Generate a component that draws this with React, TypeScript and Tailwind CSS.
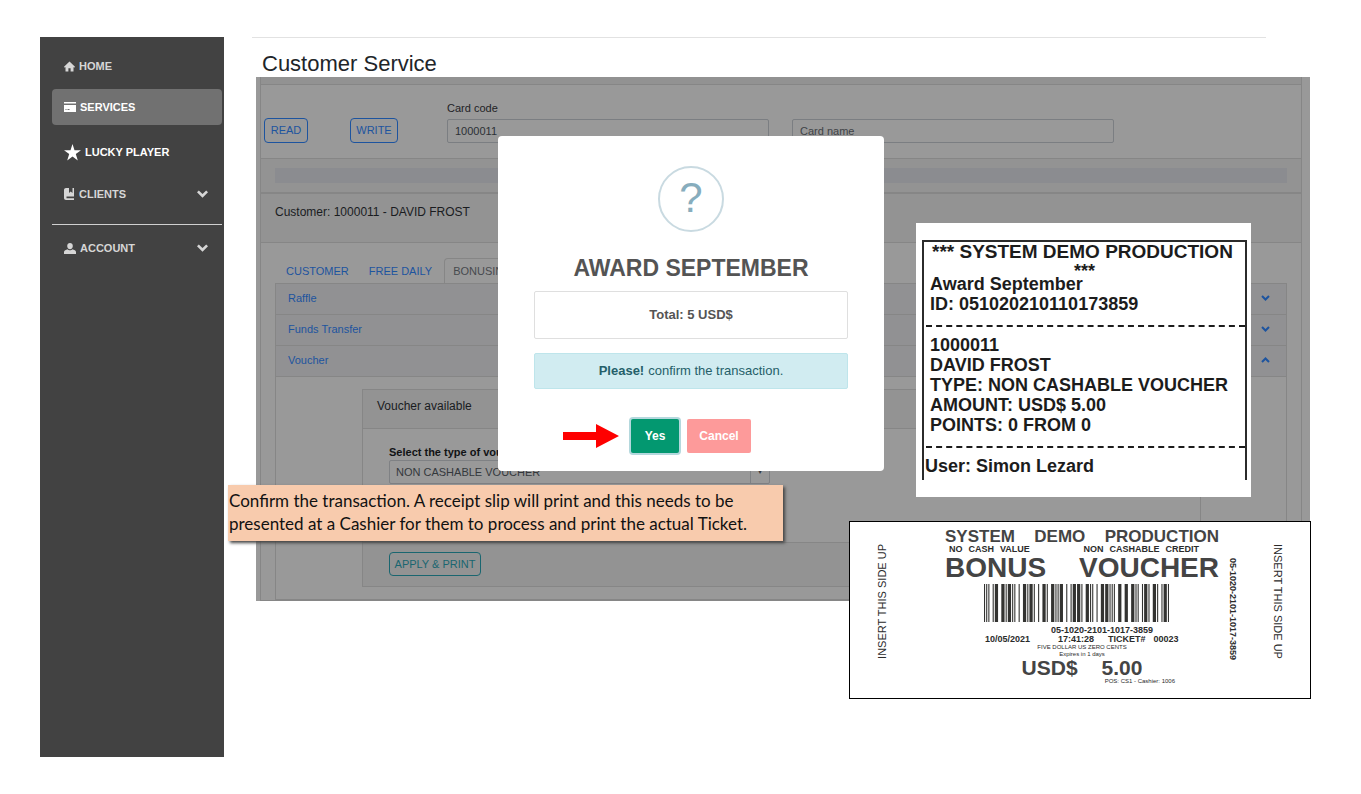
import React from "react";

const menu = [
  { name: "HOME", icon: "home", height: "h-[30px]", tone: "text-[#d6d6d6]" },
  { name: "SERVICES", icon: "card", height: "h-9 bg-[#717171] rounded", tone: "text-white" },
  { name: "LUCKY PLAYER", icon: "star", height: "h-[38px]", tone: "text-white" },
  { name: "CLIENTS", icon: "book", height: "h-[30px]", tone: "text-[#d6d6d6]", open: true },
];

// interleaved 2 of 5, w = wide, n = narrow
const digits = ["nnwwn", "wnnnw", "nwnnw", "wwnnn", "nnwnw", "wnwnn", "nwwnn", "nnnww", "wnnwn", "nwnwn"];

function MenuIcon({ name }: { name: string }) {
  if (name === "home") {
    return (
      <svg width="11" height="11" viewBox="0 0 11 11" fill="currentColor">
        <path d="M5.500.5L11 5.800l-.8.9-.7-.6V10.500H6.600V7.200H4.400v3.300H1.500V6.100l-.7.6L0 5.800z" />
      </svg>
    );
  }
  if (name === "star") {
    return (
      <svg width="17" height="17" viewBox="0 0 17 17" fill="currentColor">
        <path d="M8.500 0l2 6.200H17l-5.200 3.900 2 6.400-5.300-4-5.300 4 2-6.400L0 6.200h6.500z" />
      </svg>
    );
  }
  if (name === "user") {
    return (
      <svg width="12" height="11" viewBox="0 0 12 11" fill="currentColor">
        <path d="M6 0c1.700 0 2.800 1.200 2.800 3S7.700 6.200 6 6.200 3.200 4.800 3.200 3 4.300 0 6 0z" />
        <path d="M3.500 6.200C4.200 7 5 7.300 6 7.300S7.800 7 8.500 6.200l2.300 1C11.600 7.600 12 8.200 12 9v2H0V9c0-.8.4-1.400 1.200-1.800z" />
      </svg>
    );
  }
  if (name === "card") {
    return (
      <svg width="12" height="10" viewBox="0 0 12 10" fill="currentColor">
        <path d="M0 0h12v1.500H0zM0 3h12v7H0z" />
        <path d="M1.500 7.500h1M3.500 7.500h2" stroke="#717171" />
      </svg>
    );
  }
  return (
    <svg width="11" height="12" viewBox="0 0 11 12" fill="currentColor">
      <path d="M2 0h3v5l1.700-1.500L8.500 5V0H10v8.500H2.500v1.700H10V12H2C.8 12 0 11 0 10V2C0 .9.9 0 2 0z" />
    </svg>
  );
}

function MenuArrow() {
  return (
    <svg className="ml-auto mr-0.5" width="11" height="8" viewBox="0 0 11 8" fill="currentColor">
      <path d="M1.800.5l3.700 3.400L9.200.5 11 2.300 5.500 7.700 0 2.300z" />
    </svg>
  );
}

function Sidebar() {
  return (
    <nav className="w-[184px] shrink-0 min-h-[720px] bg-[#424242] pl-3 pr-0.5 pt-3.5 text-[11px] font-bold">
      <ul className="flex flex-col gap-2">
        {menu.map((item) => (
          <li key={item.name}>
            <a href="#" className={`flex items-center gap-1 px-3 ${item.height} ${item.tone}`}>
              <MenuIcon name={item.icon} />
              <span>{item.name}</span>
              {item.open && <MenuArrow />}
            </a>
          </li>
        ))}
      </ul>
      <div className="mt-[15px] border-t border-[#d0d0d0] pt-2">
        <a href="#" className="flex h-[30px] items-center gap-1 px-3 text-[#d6d6d6]">
          <MenuIcon name="user" />
          <span>ACCOUNT</span>
          <MenuArrow />
        </a>
      </div>
    </nav>
  );
}

function Chevron({ up }: { up?: boolean }) {
  return (
    <svg width="9" height="6" viewBox="0 0 9 6" fill="none" stroke="#1d549f" strokeWidth="2">
      <path d={up ? "M1 5l3.500-3.500L8 5" : "M1 1l3.500 3.500L8 1"} />
    </svg>
  );
}

function CardForm() {
  return (
    <div className="border border-t-0 border-[#868686]">
      <div className="h-2 border-b border-[#868686] bg-[#929292]" />
      <div className="flex h-[73px] items-end pb-[15px] pl-[3px]">
        <button className="mr-[42px] h-[25px] w-11 rounded border border-[#1d549f] text-[11px] text-[#1d549f]">READ</button>
        <button className="mr-[49px] h-[25px] w-12 rounded border border-[#1d549f] text-[11px] text-[#1d549f]">WRITE</button>
        <div className="mr-[23px] w-[322px]">
          <label htmlFor="code" className="block pb-[3px] text-[11px] leading-4 text-[#1f2226]">
            Card code
          </label>
          <input
            id="code"
            defaultValue="1000011"
            className="block h-6 w-full rounded-xs border border-[#7b7e82] px-[7px] text-[11px] text-[#2c3035]"
          />
        </div>
        <input
          aria-label="Card name"
          placeholder="Card name"
          className="h-6 w-[322px] rounded-xs border border-[#7b7e82] px-[7px] text-[11px] placeholder:text-[#3f4347]"
        />
      </div>
      <div className="border-t border-[#868686] bg-[#939393] px-3.5 py-[9px]">
        <div className="h-[15px] bg-[#8b8c90]" />
      </div>
    </div>
  );
}

function VoucherCard() {
  return (
    <div className="ml-[86px] mr-[85px] mt-3 border border-[#868686]">
      <h3 className="flex h-[39px] items-center border-b border-[#868686] bg-[#939393] px-3.5 pb-1.5 text-xs text-[#1a1c1f]">
        Voucher available
      </h3>
      <div className="h-[113px] px-[26px] pt-[15px]">
        <label htmlFor="voucher" className="block text-[11px] font-bold leading-4 text-[#111315]">
          Select the type of voucher
        </label>
        <div className="flex h-6 w-[381px] rounded-xs border border-[#7f8184]">
          <select id="voucher" className="flex-1 appearance-none border-r border-[#7f8184] px-1.5 text-[11px] text-[#34383c]">
            <option>NON CASHABLE VOUCHER</option>
          </select>
          <span className="flex w-[18px] items-center justify-center text-[8px] text-[#34383c]">▾</span>
        </div>
      </div>
      <div className="h-11 border-t border-[#868686] bg-[#939393] px-[26px] pt-2">
        <button className="h-6 w-[92px] rounded border border-[#1a6670] text-[11px] text-[#1a6670]">APPLY &amp; PRINT</button>
      </div>
    </div>
  );
}

function CustomerCard() {
  const rows = ["Raffle", "Funds Transfer", "Voucher"];
  return (
    <div className="h-[408px] overflow-hidden border border-[#868686]">
      <h2 className="h-[49px] border-b border-[#868686] bg-[#939393] px-3.5 pt-2.5 text-xs leading-4 text-[#1a1c1f]">
        Customer: 1000011 - DAVID FROST
      </h2>
      <div className="px-3.5 pt-4">
        <div className="flex h-6 items-end pl-[11px] text-[11px] leading-6 text-[#1d549f]">
          <button className="mr-5">CUSTOMER</button>
          <button className="mr-3">FREE DAILY</button>
          <button className="rounded-t-sm border border-b-0 border-[#868686] px-2 text-[#474a4e]">BONUSING</button>
        </div>
        <div className="border border-[#868686] pb-3">
          {rows.map((row) => (
            <button
              key={row}
              className="flex h-[31px] w-full items-center justify-between border-b border-[#868686] bg-[#919193] pb-0.5 pl-3 pr-4 text-[11px] text-[#1d549f]"
            >
              {row}
              <Chevron up={row === "Voucher"} />
            </button>
          ))}
          <VoucherCard />
        </div>
      </div>
    </div>
  );
}

function ConfirmDialog() {
  return (
    <div
      role="dialog"
      className="absolute left-[242px] top-[59px] flex w-[386px] flex-col items-center rounded bg-white px-9 pb-[18px] pt-[30px] text-[#545454]"
    >
      <div className="flex size-[66px] items-center justify-center rounded-full border-2 border-[#c9dae1] pb-1 text-[42px] text-[#87adbd]">
        ?
      </div>
      <h2 className="mt-5 text-[23px] font-bold leading-8">AWARD SEPTEMBER</h2>
      <div className="mt-[7px] flex h-12 w-full items-center justify-center rounded-xs border border-[#dfdfdf] text-[13px] font-bold">
        Total: 5 USD$
      </div>
      <div className="mt-3.5 flex h-9 w-full items-center justify-center gap-1 rounded-xs border border-[#bee5eb] bg-[#d1ecf1] text-[13px] text-[#255f69]">
        <strong>Please!</strong> confirm the transaction.
      </div>
      <div className="mt-[30px] flex w-full items-center pl-[29px]">
        <svg width="56" height="24" viewBox="0 0 56 24" fill="#fe0000">
          <path d="M0 8h33V0l23 12-23 12v-8H0z" />
        </svg>
        <button className="ml-3 h-[34px] w-12 rounded-xs bg-[#039870] text-xs font-bold text-white ring-2 ring-[#b4d8dd]">Yes</button>
        <button className="ml-2 h-[34px] w-16 rounded-xs bg-[#fd9a9a] text-xs font-bold text-white">Cancel</button>
      </div>
    </div>
  );
}

function Receipt() {
  return (
    <div className="absolute right-[59px] top-[146px] h-[274px] w-[335px] bg-white px-1.5 pt-[17px] text-[#1c1c1c]">
      <div className="h-60 w-[325px] border-x-2 border-t-2 border-[#2b2b2b] text-[18px] font-bold leading-5">
        <p className="whitespace-nowrap pl-2 text-[19px] leading-[19px]">*** SYSTEM DEMO PRODUCTION</p>
        <p className="h-[13px] text-center leading-5">***</p>
        <p className="pl-1.5">Award September</p>
        <p className="pl-1.5">ID: 051020210110173859</p>
        <div className="mb-2 ml-0.5 mt-[11px] border-t-2 border-dashed border-[#1c1c1c]" />
        <p className="pl-1.5">1000011</p>
        <p className="pl-1.5">DAVID FROST</p>
        <p className="whitespace-nowrap pl-1.5">TYPE: NON CASHABLE VOUCHER</p>
        <p className="pl-1.5">AMOUNT: USD$ 5.00</p>
        <p className="pl-1.5">POINTS: 0 FROM 0</p>
        <div className="mb-2 ml-0.5 mt-[11px] border-t-2 border-dashed border-[#1c1c1c]" />
        <p className="pl-px">User: Simon Lezard</p>
      </div>
    </div>
  );
}

function Barcode({ code }: { code: string }) {
  let pattern = "nnnn";
  for (let i = 0; i < code.length; i += 2) {
    for (let j = 0; j < 5; j++) {
      pattern += digits[Number(code[i])][j] + digits[Number(code[i + 1])][j];
    }
  }
  pattern += "wnn";

  let x = 0;
  return (
    <svg width="185" height="38" viewBox="0 0 171 38" preserveAspectRatio="none" fill="#333331">
      {pattern.split("").map((c, i) => {
        const w = c === "w" ? 3 : 1;
        const start = x;
        x += w;
        return i % 2 === 0 ? <rect key={i} x={start} width={w} height="38" /> : null;
      })}
    </svg>
  );
}

function Ticket() {
  return (
    <div className="absolute -right-px top-[444px] flex h-[178px] w-[462px] items-start border border-black bg-white px-6 text-[9px] font-bold leading-[9px] text-[#2b2b2b]">
      <p className="mt-[22px] w-4 rotate-180 text-center text-[11px] font-normal leading-4 [writing-mode:vertical-rl]">INSERT THIS SIDE UP</p>
      <div className="ml-[55px] flex w-[274px] flex-col items-center pt-1.5">
        <div className="flex w-full justify-between text-[17px] leading-[17px] text-[#444]">
          <span>SYSTEM</span>
          <span>DEMO</span>
          <span>PRODUCTION</span>
        </div>
        <div className="flex w-full justify-between pl-1 pr-5">
          <span className="flex gap-1.5"><span>NO</span><span>CASH</span><span>VALUE</span></span>
          <span className="flex gap-1.5"><span>NON</span><span>CASHABLE</span><span>CREDIT</span></span>
        </div>
        <div className="flex w-full justify-between text-[28px] leading-[28px] text-[#444]">
          <span>BONUS</span>
          <span>VOUCHER</span>
        </div>
        <div className="mt-0.5 pr-3">
          <Barcode code="051020210110173859" />
        </div>
        <p className="mt-1 pl-10">05-1020-2101-1017-3859</p>
        <div className="flex w-full pl-10">
          <span className="mr-7">10/05/2021</span>
          <span className="mr-3.5">17:41:28</span>
          <span className="mr-2">TICKET#</span>
          <span>00023</span>
        </div>
        <p className="text-[6px] font-normal leading-[7px]">FIVE DOLLAR US ZERO CENTS</p>
        <p className="text-[6px] font-normal leading-[7px]">Expires in 1 days</p>
        <p className="flex gap-6 text-[21px] leading-5 text-[#444]"><span>USD$</span><span>5.00</span></p>
        <p className="self-end pr-11 text-[6px] font-normal leading-[7px]">POS: CS1 - Cashier: 1006</p>
      </div>
      <p className="ml-2 mt-9 w-3 text-center leading-3 [writing-mode:vertical-rl]">05-1020-2101-1017-3859</p>
      <p className="ml-auto mt-[22px] w-4 text-center text-[11px] font-normal leading-4 [writing-mode:vertical-rl]">INSERT THIS SIDE UP</p>
    </div>
  );
}

export default function App() {
  return (
    <div className="flex min-h-screen items-start bg-white pl-10 pr-[51px] pt-[37px] font-['Liberation_Sans',Arial,sans-serif]">
      <Sidebar />
      <main className="min-w-0 flex-1 pl-8">
        <header className="-ml-1 mr-11 h-10 border-t border-[#e2e2e2] pl-2.5 pt-2.5">
          <h1 className="text-[22px] leading-8 text-[#212529]">Customer Service</h1>
        </header>
        <section className="relative h-[524px] bg-[#999] pl-1 pr-2">
          <CardForm />
          <CustomerCard />
          <ConfirmDialog />
          <p className="absolute -left-7 top-[408px] w-[555px] whitespace-nowrap bg-[#f8cbad] px-px pb-1.5 pt-1 font-['Lato',sans-serif] text-[17px] leading-[23px] text-[#111] shadow-[2px_2px_3px_#444]">
            Confirm the transaction. A receipt slip will print and this needs to be
            <br />
            presented at a Cashier for them to process and print the actual Ticket.
          </p>
          <Receipt />
          <Ticket />
        </section>
      </main>
    </div>
  );
}
